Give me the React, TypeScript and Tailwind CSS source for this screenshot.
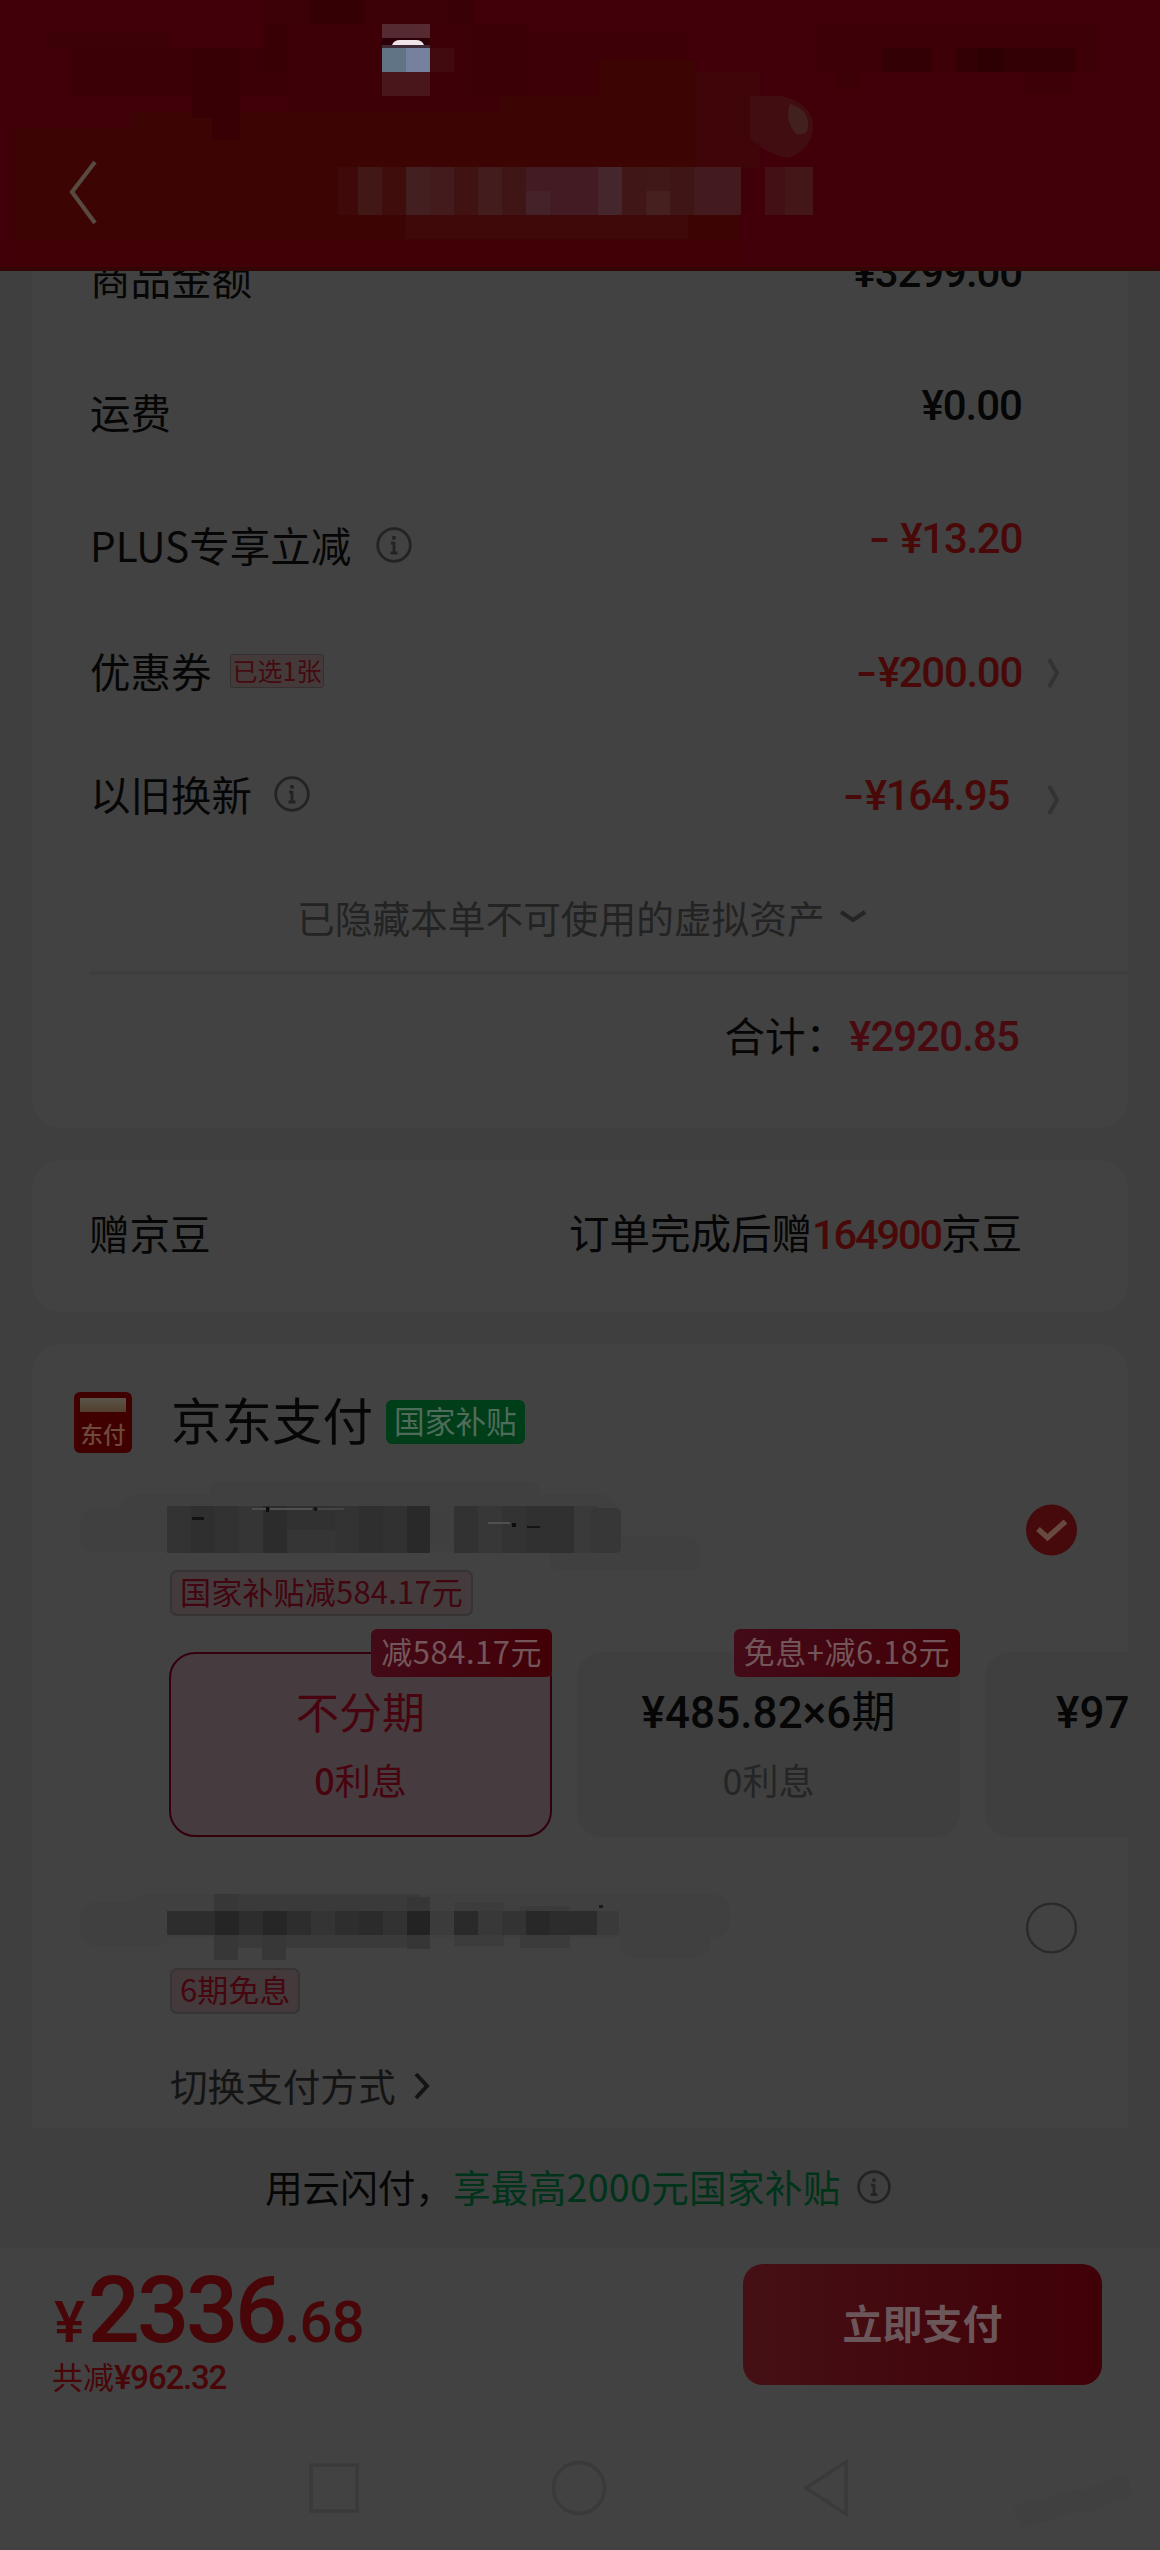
import React from 'react'

const CJK = "font-['Noto_Sans_CJK_SC',sans-serif]"
const NUM = "font-['Roboto','Noto_Sans_CJK_SC',sans-serif]"

type Block = { x: number; y: number; w: number; h: number; c: string; r?: number }

// Pixelated censor blocks
const Mosaic: React.FC<{ blocks: Block[]; width: number; height: number }> = ({ blocks, width, height }) => (
  <svg width={width} height={height} viewBox={`0 0 ${width} ${height}`} className="block" shapeRendering="crispEdges">
    {blocks.map((b, i) => (
      <rect key={i} x={b.x} y={b.y} width={b.w} height={b.h} rx={b.r} fill={b.c} />
    ))}
  </svg>
)

const headerBlocks: Block[] = [
  { x: 50, y: 32, w: 120, h: 16, c: '#3c0007' },
  { x: 72, y: 48, w: 216, h: 48, c: '#3a0006' },
  { x: 14, y: 128, w: 726, h: 112, c: '#3d0404' },
  { x: 130, y: 112, w: 565, h: 54, c: '#3d0404' },
  { x: 192, y: 48, w: 48, h: 70, c: '#360004' },
  { x: 212, y: 118, w: 28, h: 22, c: '#380004' },
  { x: 264, y: 0, w: 190, h: 24, c: '#3c0007' },
  { x: 310, y: 0, w: 54, h: 24, c: '#350004' },
  { x: 450, y: 0, w: 24, h: 24, c: '#390005' },
  { x: 264, y: 24, w: 24, h: 48, c: '#380005' },
  { x: 288, y: 24, w: 240, h: 88, c: '#3d0007' },
  { x: 472, y: 24, w: 56, h: 72, c: '#3a0005' },
  { x: 528, y: 32, w: 160, h: 64, c: '#3e0007' },
  { x: 500, y: 96, w: 195, h: 24, c: '#3d0404' },
  { x: 600, y: 60, w: 95, h: 36, c: '#3d0404' },
  { x: 382, y: 24, w: 48, h: 14, c: '#552a30' },
  { x: 382, y: 38, w: 48, h: 10, c: '#2b0008' },
  { x: 382, y: 45, w: 48, h: 3, c: '#3b2a35' },
  { x: 382, y: 48, w: 24, h: 24, c: '#617486' },
  { x: 406, y: 48, w: 24, h: 24, c: '#7681a0' },
  { x: 430, y: 48, w: 24, h: 24, c: '#400a0e' },
  { x: 382, y: 72, w: 48, h: 24, c: '#48161b' },
  { x: 814, y: 24, w: 284, h: 48, c: '#3d0007' },
  { x: 836, y: 72, w: 24, h: 18, c: '#3d0007' },
  { x: 1026, y: 72, w: 48, h: 22, c: '#3d0007' },
  { x: 882, y: 48, w: 50, h: 24, c: '#330005' },
  { x: 956, y: 48, w: 120, h: 24, c: '#330005' },
  { x: 978, y: 48, w: 26, h: 24, c: '#2d0005' },
  { x: 696, y: 72, w: 64, h: 96, c: '#400509' },
  { x: 338, y: 167, w: 20, h: 48, c: '#3f0909' },
  { x: 358, y: 167, w: 24, h: 48, c: '#421816' },
  { x: 382, y: 167, w: 24, h: 48, c: '#3f0d0c' },
  { x: 406, y: 167, w: 24, h: 48, c: '#441f22' },
  { x: 430, y: 167, w: 24, h: 48, c: '#431b1d' },
  { x: 454, y: 167, w: 24, h: 48, c: '#401212' },
  { x: 478, y: 167, w: 24, h: 48, c: '#431d1d' },
  { x: 502, y: 167, w: 24, h: 48, c: '#3f1515' },
  { x: 526, y: 167, w: 72, h: 48, c: '#431b22' },
  { x: 526, y: 191, w: 24, h: 24, c: '#45222a' },
  { x: 598, y: 167, w: 24, h: 48, c: '#45262c' },
  { x: 622, y: 167, w: 24, h: 48, c: '#401616' },
  { x: 646, y: 167, w: 24, h: 24, c: '#401818' },
  { x: 646, y: 191, w: 24, h: 24, c: '#45201e' },
  { x: 670, y: 167, w: 24, h: 48, c: '#401515' },
  { x: 694, y: 167, w: 47, h: 48, c: '#431a1e' },
  { x: 765, y: 167, w: 20, h: 48, c: '#421015' },
  { x: 785, y: 167, w: 28, h: 48, c: '#431717' },
  { x: 406, y: 215, w: 282, h: 24, c: '#3f090a' },
  { x: 14, y: 240, w: 728, h: 27, c: '#3f0006' },
]

const cardBlocks: Block[] = [
  { x: 0, y: 28, w: 100, h: 44, c: '#404040', r: 14 },
  { x: 40, y: 14, w: 500, h: 58, c: '#404040', r: 20 },
  { x: 130, y: 2, w: 330, h: 20, c: '#404040', r: 8 },
  { x: 470, y: 56, w: 150, h: 38, c: '#404040', r: 14 },
  { x: 87, y: 26, w: 24, h: 47, c: '#333333' },
  { x: 111, y: 26, w: 24, h: 47, c: '#2f2f2f' },
  { x: 135, y: 26, w: 24, h: 47, c: '#323232' },
  { x: 159, y: 26, w: 24, h: 47, c: '#353535' },
  { x: 183, y: 26, w: 24, h: 47, c: '#2c2c2c' },
  { x: 207, y: 26, w: 48, h: 24, c: '#313131' },
  { x: 207, y: 50, w: 48, h: 23, c: '#353535' },
  { x: 255, y: 26, w: 24, h: 47, c: '#333333' },
  { x: 279, y: 26, w: 24, h: 47, c: '#2f2f2f' },
  { x: 303, y: 26, w: 24, h: 47, c: '#313131' },
  { x: 327, y: 26, w: 23, h: 47, c: '#292929' },
  { x: 350, y: 30, w: 24, h: 36, c: '#3f3f3f' },
  { x: 374, y: 26, w: 24, h: 47, c: '#323232' },
  { x: 398, y: 26, w: 24, h: 47, c: '#373737' },
  { x: 422, y: 26, w: 24, h: 47, c: '#333333' },
  { x: 446, y: 26, w: 48, h: 47, c: '#303030' },
  { x: 494, y: 26, w: 24, h: 47, c: '#3a3a3a' },
  { x: 510, y: 28, w: 31, h: 45, c: '#373737', r: 5 },
  // leftovers of strokes under the censor brush
  { x: 112, y: 37, w: 12, h: 3, c: '#121212' },
  { x: 172, y: 28, w: 14, h: 2, c: '#4c4c4c' },
  { x: 186, y: 27, w: 3, h: 5, c: '#0d0d0d' },
  { x: 190, y: 28, w: 42, h: 2, c: '#505050' },
  { x: 234, y: 27, w: 3, h: 4, c: '#151515' },
  { x: 238, y: 28, w: 26, h: 2, c: '#444444' },
  { x: 408, y: 42, w: 22, h: 2, c: '#505050' },
  { x: 432, y: 43, w: 4, h: 4, c: '#0d0d0d' },
  { x: 447, y: 46, w: 13, h: 2, c: '#141414' },
]

const secondBlocks: Block[] = [
  { x: 0, y: 26, w: 90, h: 44, c: '#404040', r: 14 },
  { x: 50, y: 18, w: 600, h: 44, c: '#404040', r: 16 },
  { x: 540, y: 26, w: 90, h: 56, c: '#404040', r: 14 },
  { x: 134, y: 18, w: 206, h: 54, c: '#3a3a3a' },
  { x: 327, y: 21, w: 23, h: 52, c: '#363636' },
  { x: 134, y: 18, w: 24, h: 66, c: '#373737' },
  { x: 182, y: 40, w: 24, h: 44, c: '#373737' },
  { x: 374, y: 26, w: 50, h: 44, c: '#3c3c3c' },
  { x: 440, y: 30, w: 50, h: 42, c: '#3b3b3b' },
  { x: 87, y: 35, w: 48, h: 24, c: '#2d2d2d' },
  { x: 135, y: 35, w: 24, h: 24, c: '#252525' },
  { x: 159, y: 35, w: 24, h: 24, c: '#2d2d2d' },
  { x: 183, y: 35, w: 24, h: 24, c: '#262626' },
  { x: 207, y: 35, w: 24, h: 24, c: '#2d2d2d' },
  { x: 231, y: 35, w: 24, h: 24, c: '#343434' },
  { x: 255, y: 35, w: 24, h: 24, c: '#2e2e2e' },
  { x: 279, y: 35, w: 24, h: 24, c: '#2b2b2b' },
  { x: 303, y: 35, w: 24, h: 24, c: '#323232' },
  { x: 327, y: 35, w: 23, h: 24, c: '#232323' },
  { x: 350, y: 35, w: 24, h: 24, c: '#3b3b3b' },
  { x: 374, y: 35, w: 24, h: 24, c: '#2a2a2a' },
  { x: 398, y: 35, w: 24, h: 24, c: '#383838' },
  { x: 422, y: 35, w: 24, h: 24, c: '#333333' },
  { x: 446, y: 35, w: 24, h: 24, c: '#282828' },
  { x: 470, y: 35, w: 47, h: 24, c: '#2c2c2c' },
  { x: 517, y: 35, w: 22, h: 24, c: '#3a3a3a' },
  { x: 519, y: 29, w: 4, h: 3, c: '#1a1a1a' },
]

const InfoIcon: React.FC<{ size?: number }> = ({ size = 36 }) => (
  <svg width={size} height={size} viewBox="0 0 36 36" fill="none" stroke="#232323">
    <circle cx="18" cy="18" r="16.3" strokeWidth="2.8" />
    <path d="M18 15v11M15 16h3M14.5 26h7" strokeWidth="2.8" />
    <path d="M18 9v3.6" strokeWidth="3.6" />
  </svg>
)

const Arrow: React.FC = () => (
  <svg width="16" height="32" viewBox="0 0 16 32" fill="none" stroke="#333333" strokeWidth="4">
    <path d="M3 2l8 14-8 14" />
  </svg>
)

const Minus: React.FC = () => <span className="mr-[3px] inline-block origin-right scale-x-[1.45]">-</span>

const App: React.FC = () => {
  return (
    <div className={`flex h-[2550px] w-[1160px] flex-col overflow-hidden bg-[#3f3f3f] text-[#060606] ${CJK}`}>
      <header className="relative h-[271px] shrink-0 border-b-[4px] border-[#330505] bg-[#410009]">
        <Mosaic blocks={headerBlocks} width={1160} height={267} />
        <svg className="absolute left-0 top-0" width="1160" height="267" fill="none">
          <path d="M95 162L72 192L95 223" stroke="#574b40" strokeWidth="4.2" />
          <path d="M392 45q2-5 8-5h16q6 0 8 5z" fill="#f0e4e8" />
          <path d="M750 96h32q31 8 31 30t-24 32q-20-2-39-20z" fill="#410d11" />
          <path d="M790 104q16 4 18 18t-12 12q-12-14-6-30z" fill="#432020" />
        </svg>
      </header>

      <section className="mx-[32px] h-[857px] shrink-0 overflow-hidden rounded-b-[30px] bg-[#424242] pl-[58px] text-[40.5px] leading-[60px]">
        <div className="-mt-[23px] flex h-[134px] justify-between pr-[106px]">
          <span>商品金额</span>
          <span className={`-mt-[5px] text-[42px] font-medium tracking-[-1.1px] ${NUM}`}>¥3299.00</span>
        </div>
        <div className="flex h-[133px] justify-between pr-[106px]">
          <span>运费</span>
          <span className={`-mt-[6px] text-[42px] font-medium tracking-[-1px] ${NUM}`}>¥0.00</span>
        </div>
        <div className="flex h-[126px] justify-between pr-[106px]">
          <span className="flex h-[60px] items-center gap-[25px]">
            PLUS专享立减
            <InfoIcon />
          </span>
          <span className={`-mt-[6px] text-[42px] font-medium tracking-[-1.3px] text-[#490909] ${NUM}`}>
            <Minus /> ¥13.20
          </span>
        </div>
        <div className="flex h-[123px] justify-between pr-[66px]">
          <span className="flex h-[60px] items-center gap-[18px]">
            优惠券
            <span className="flex h-[34px] items-center rounded-[3px] border border-[#353030] bg-[#443a3a] px-[2px] pb-[2px] text-[25px] text-[#440a10]">
              已选1张
            </span>
          </span>
          <span className={`flex h-[64px] items-center text-[42px] font-medium tracking-[-1.3px] text-[#490909] ${NUM}`}>
            <Minus />
            ¥200.00
            <span className="ml-[24px]">
              <Arrow />
            </span>
          </span>
        </div>
        <div className="flex h-[123px] justify-between pr-[66px]">
          <span className="flex h-[60px] items-center gap-[22px]">
            以旧换新
            <InfoIcon />
          </span>
          <span className={`flex h-[64px] items-center text-[42px] font-medium tracking-[-1.3px] text-[#490909] ${NUM}`}>
            <Minus />
            ¥164.95
            <span className="ml-[37px] mt-[8px]">
              <Arrow />
            </span>
          </span>
        </div>
        <div className="flex h-[84px] items-start gap-[14px] pl-[207px] text-[37.7px] text-[#232323]">
          已隐藏本单不可使用的虚拟资产
          <svg className="mt-[21px]" width="28" height="16" viewBox="0 0 28 16" fill="none" stroke="#252525" strokeWidth="4">
            <path d="M2 4l12 8 12-8" />
          </svg>
        </div>
        <div className="h-[4px] bg-[#3e3e3e]" />
        <div className="mt-[30px] flex justify-end gap-[3px] pr-[109px]">
          <span>合计：</span>
          <span className={`mt-[2px] text-[42px] font-medium tracking-[-0.9px] text-[#490a10] ${NUM}`}>¥2920.85</span>
        </div>
      </section>

      <section className="mx-[32px] mt-[32px] flex h-[152px] shrink-0 items-center justify-between rounded-[30px] bg-[#424242] pl-[57px] pr-[106px] text-[40.5px]">
        <span className="mb-[6px]">赠京豆</span>
        <span className="mb-[3px]">
          订单完成后赠
          <span className={`text-[41.5px] font-medium tracking-[-2.1px] text-[#490909] ${NUM}`}>164900</span>
          京豆
        </span>
      </section>

      <section className="mx-[32px] mt-[32px] h-[784px] shrink-0 overflow-hidden rounded-t-[30px] bg-[#424242]">
        <div className="flex h-[136px] items-center pl-[42px] pt-[21px]">
          <div className="flex h-[61px] w-[58px] flex-col items-center rounded-[6px] bg-[#400000] pt-[6px]">
            <div className="h-[14px] w-[46px] bg-gradient-to-b from-[#5a544b] to-[#533f2d]" />
            <span className="mt-[6px] text-[22.5px] font-medium leading-[30px] text-[#6d4a3c]">东付</span>
          </div>
          <span className="mb-[8px] ml-[39px] text-[50.5px]">京东支付</span>
          <span className="mb-[2px] ml-[13px] flex h-[44px] items-center rounded-[6px] bg-[#003d19] px-[8px] pb-[2px] text-[30.7px] text-[#4f6c5a]">
            国家补贴
          </span>
        </div>

        <div className="flex h-[90px] justify-between pl-[48px] pr-[51px]">
          <Mosaic blocks={cardBlocks} width={640} height={90} />
          <svg className="mt-[24px]" width="51" height="52" viewBox="0 0 51 52" fill="none">
            <circle cx="25.5" cy="26" r="25.5" fill="#470a0c" />
            <path d="M12 25l9.500 8.500 18-16" stroke="#67493f" strokeWidth="5.5" />
          </svg>
        </div>

        <div className="flex pl-[138px]">
          <span className="flex h-[46px] items-center rounded-[7px] border-2 border-[#363334] bg-[#443b3d] px-[8px] pb-[3px] text-[31px] tracking-[0.2px] text-[#420610]">
            国家补贴减584.17元
          </span>
        </div>

        <div className="mt-[36px] flex gap-[25px] pl-[137px]">
          <div className="relative flex h-[185px] w-[383px] shrink-0 flex-col items-center rounded-[26px] border-2 border-[#33000b] bg-[#463b3e] text-[#48040e]">
            <span className="absolute -right-[2px] -top-[25px] flex h-[48px] items-center whitespace-nowrap rounded-[6px] bg-gradient-to-r from-[#430a18] to-[#420006] px-[10px] pb-[3px] text-[31px] tracking-[0.5px] text-[#73565a]">
              减584.17元
            </span>
            <span className="mt-[26px] text-[43px] leading-[60px]">不分期</span>
            <span className="mt-[11px] text-[36px] leading-[56px]">
              <span className="font-medium">0</span>利息
            </span>
          </div>
          <div className="relative flex h-[185px] w-[383px] shrink-0 flex-col items-center rounded-[26px] bg-[#3f3f3f]">
            <span className="absolute right-0 -top-[23px] flex h-[48px] items-center whitespace-nowrap rounded-[6px] bg-gradient-to-r from-[#430a18] to-[#420006] px-[10px] pb-[3px] text-[31px] tracking-[0.55px] text-[#73565a]">
              免息+减6.18元
            </span>
            <span className={`mt-[31px] text-[44px] font-medium leading-[60px] tracking-[0.1px] ${NUM}`}>
              ¥485.82×6<span className="font-normal">期</span>
            </span>
            <span className="mt-[8px] text-[36px] leading-[56px] text-[#252525]">0利息</span>
          </div>
          <div className="h-[185px] w-[383px] shrink-0 rounded-[26px] bg-[#3f3f3f] pl-[71px] pt-[31px]">
            <span className={`text-[44px] font-medium leading-[60px] tracking-[0.1px] ${NUM}`}>¥97</span>
          </div>
        </div>

        <div className="mt-[39px] flex h-[92px] justify-between pl-[48px] pr-[51px]">
          <Mosaic blocks={secondBlocks} width={680} height={92} />
          <svg className="mt-[26px]" width="51" height="52" viewBox="0 0 51 52" fill="none">
            <circle cx="25.5" cy="26" r="24.4" stroke="#2a2a2a" strokeWidth="2.4" />
          </svg>
        </div>
        <div className="flex pl-[138px]">
          <span className="flex h-[46px] items-center rounded-[7px] border-2 border-[#363334] bg-[#443a3b] px-[8px] pb-[3px] text-[31px] text-[#460610]">
            6期免息
          </span>
        </div>
        <div className="mt-[43px] flex h-[56px] items-center gap-[18px] pl-[138px] text-[37.6px] text-[#141414]">
          切换支付方式
          <svg className="mt-[2px]" width="18" height="28" viewBox="0 0 18 28" fill="none" stroke="#141414" strokeWidth="4">
            <path d="M3 2l11 12-11 12" />
          </svg>
        </div>
      </section>

      <div className="flex h-[120px] shrink-0 items-center pb-[3px] pl-[265px] text-[37.6px]">
        <span>用云闪付，</span>
        <span className="tracking-[0.3px] text-[#00341a]">享最高2000元国家补贴</span>
        <span className="ml-[16px]">
          <InfoIcon size={34} />
        </span>
      </div>

      <footer className="flex grow flex-col bg-[#424242]">
        <div className="flex h-[180px] justify-between pl-[52px] pr-[58px]">
          <div className="text-[#490608]">
            <div className={`flex h-[103px] items-baseline pl-[2px] font-medium leading-[126px] ${NUM}`}>
              <span className="text-[58px]">¥</span>
              <span className="ml-[3px] text-[92px] tracking-[-3.2px]">2336</span>
              <span className="text-[58px] tracking-[-0.8px]">.68</span>
            </div>
            <div className="text-[31px] leading-[50px]">
              共减<span className={`text-[33px] font-medium tracking-[-1.2px] ${NUM}`}>¥962.32</span>
            </div>
          </div>
          <button className="mt-[16px] flex h-[121px] w-[359px] items-center justify-center rounded-[20px] bg-gradient-to-r from-[#451015] to-[#400007] pb-[5px] text-[40px] font-bold text-[#6b565a]">
            立即支付
          </button>
        </div>
        <svg width="1160" height="122" viewBox="0 2428 1160 122" fill="none" stroke="#3a3a3a" strokeWidth="3.4">
          <rect x="311" y="2465" width="46" height="46" />
          <circle cx="579" cy="2488" r="25.5" />
          <path d="M806 2488L846 2462V2514Z" />
          <path d="M1018 2518l12-6 20-2 16-8 24-2 20-10 20-4" stroke="#404040" strokeWidth="22" />
        </svg>
      </footer>
    </div>
  )
}

export default App
